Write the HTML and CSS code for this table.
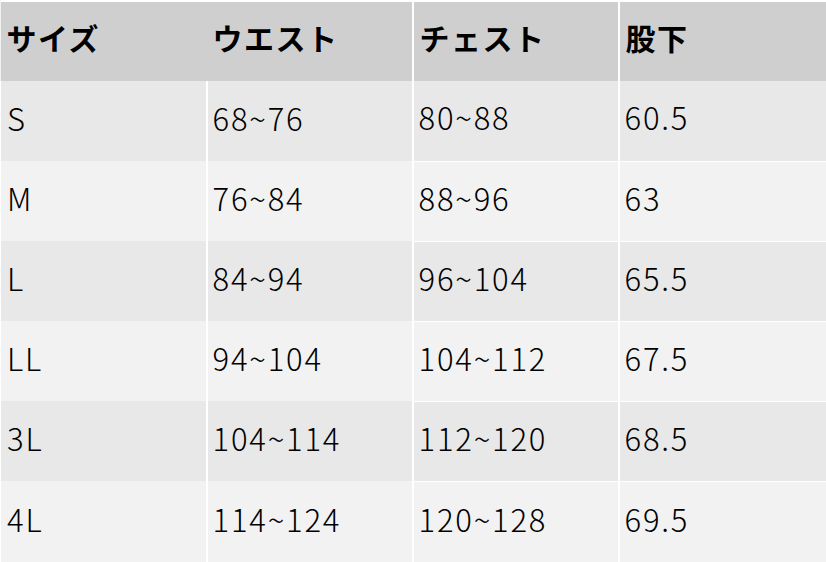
FILE: index.html
```html
<!DOCTYPE html>
<html lang="ja">
<head>
<meta charset="utf-8">
<title>サイズ表</title>
<link rel="stylesheet" href="styles.css">
</head>
<body>
<table class="size-table">
  <colgroup>
    <col class="c1"><col class="c2"><col class="c3"><col class="c4">
  </colgroup>
  <thead>
    <tr>
      <th>サイズ</th><th class="nl">ウエスト</th><th>チェスト</th><th>股下</th>
    </tr>
  </thead>
  <tbody>
    <tr class="odd"><td>S</td><td>68~76</td><td>80~88</td><td>60.5</td></tr>
    <tr class="even"><td>M</td><td>76~84</td><td>88~96</td><td>63</td></tr>
    <tr class="odd"><td>L</td><td>84~94</td><td>96~104</td><td>65.5</td></tr>
    <tr class="even"><td>LL</td><td>94~104</td><td>104~112</td><td>67.5</td></tr>
    <tr class="odd"><td>3L</td><td>104~114</td><td>112~120</td><td>68.5</td></tr>
    <tr class="even last"><td>4L</td><td>114~124</td><td>120~128</td><td>69.5</td></tr>
  </tbody>
</table>
</body>
</html>
```
FILE: styles.css
```css
html, body {
  margin: 0;
  padding: 0;
  background: #f2f2f2;
}
.size-table {
  width: 826px;
  border-collapse: collapse;
  table-layout: fixed;
  font-family: "Noto Sans CJK JP", "Noto Sans", sans-serif;
  color: #000;
}
.c1, .c2, .c3 { width: 206px; }
.c4 { width: 208px; }
.size-table th,
.size-table td {
  text-align: left;
  vertical-align: middle;
  padding: 0 0 0 6px;
  height: 80px;
  box-sizing: border-box;
  white-space: nowrap;
}
.size-table th {
  background: #cfcfcf;
  font-weight: 700;
  font-size: 30px;
  letter-spacing: 1.5px;
  color: #000;
  border-top: 2px solid #fff;
  padding-bottom: 10px;
}
.size-table th + th { border-left: 2px solid #fff; }
.size-table th.nl { border-left: none; }
.size-table td {
  font-size: 31px;
  font-weight: 300;
  letter-spacing: 1.8px;
  padding-bottom: 8px;
}
.size-table td + td { border-left: 2px solid #fff; padding-left: 5px; }
.size-table td:first-child { border-left: 1px solid #fff; }
.size-table tr.odd td { background: #e8e8e8; }
.size-table tr.even td { background: #f2f2f2; }
.size-table tbody tr + tr td:nth-child(n+3) { border-top: 1px solid #fff; }
.size-table tr.last td { height: 82px; }
```
